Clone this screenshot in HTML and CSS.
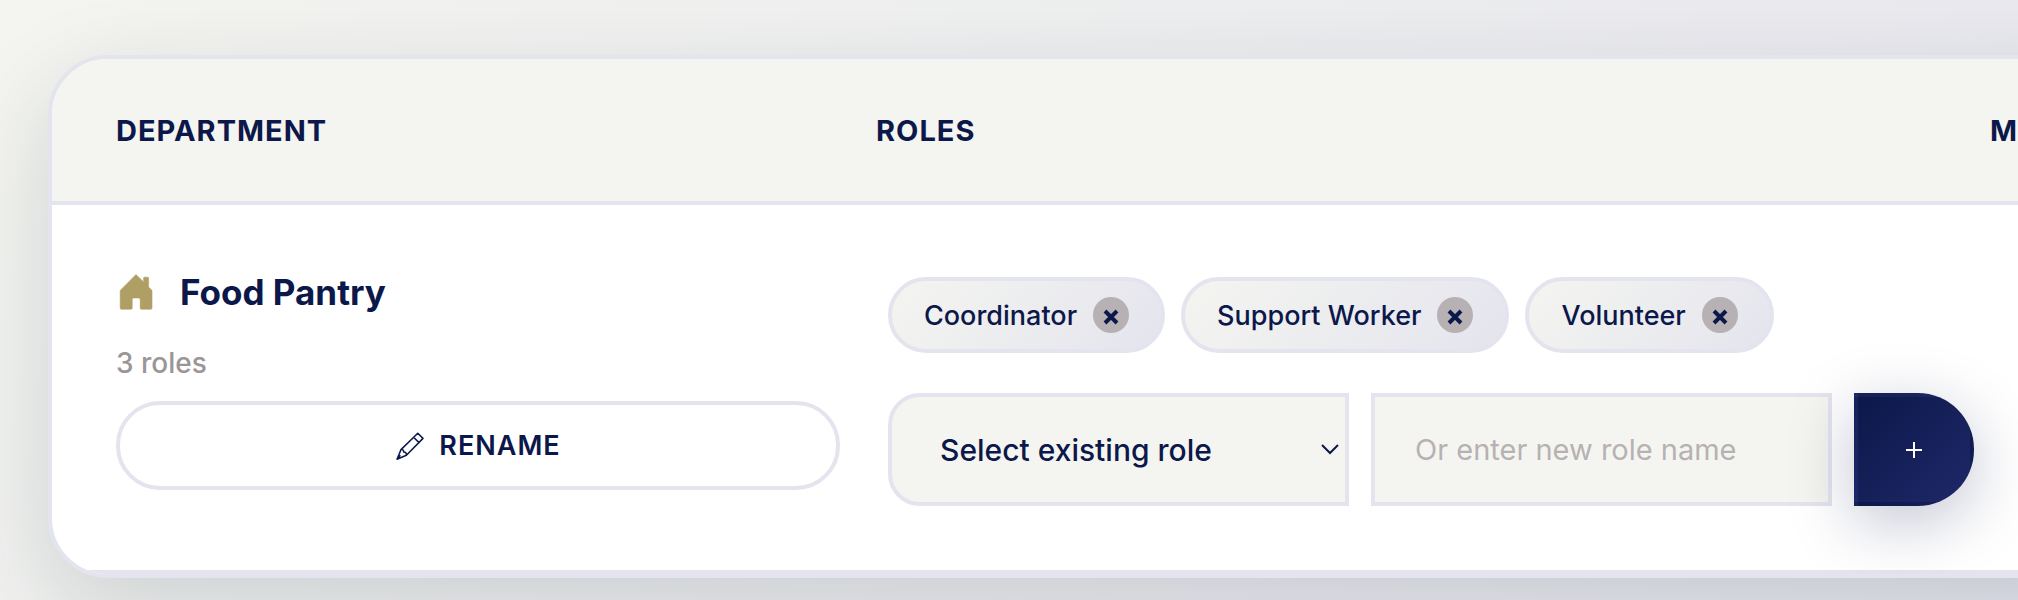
FILE: index.html
```html
<!DOCTYPE html>
<html lang="en">
<head>
<meta charset="utf-8">
<title>Departments</title>
<link rel="stylesheet" href="styles.css">
</head>
<body>
<main class="page">
  <div class="card">
    <table class="departments">
      <colgroup>
        <col class="col-department">
        <col class="col-roles">
        <col class="col-more">
      </colgroup>
      <thead>
        <tr>
          <th scope="col">Department</th>
          <th scope="col">Roles</th>
          <th scope="col">M</th>
        </tr>
      </thead>
      <tbody>
        <tr>
          <td>
            <div class="department">
              <svg class="department-icon" viewBox="0 0 40 40" aria-hidden="true">
                <path d="M20 2.6 27.6 10V6a.8.8 0 0 1 .8-.8h3.4a.8.8 0 0 1 .8.8v9L36 18.4V36a1.200 1.200 0 0 1-1.200 1.200H25.400A1.200 1.200 0 0 1 24.200 36V27.500a1.500 1.500 0 0 0-1.500-1.500h-5a1.500 1.500 0 0 0-1.500 1.500V36a1.200 1.200 0 0 1-1.200 1.200H5.400A1.200 1.200 0 0 1 4.200 36V18.400z" fill="currentColor" stroke="currentColor" stroke-width=".6" stroke-linejoin="round"/>
              </svg>
              <span class="department-name">Food Pantry</span>
            </div>
            <div class="role-count">3 roles</div>
            <button class="rename" type="button">
              <svg class="pencil" viewBox="0 0 30 30" aria-hidden="true">
                <path d="M2 28.200 6 18.600 22.800 2.200 28 7.400 11.400 24.200zM18.600 6.200l5.400 5.400M6 18.600c1.800-.3 2.800.6 2.600 2.400 1.800-.2 3 1 2.800 3.200M2 28.200 5 24.800" fill="none" stroke="currentColor" stroke-width="1.500" stroke-linejoin="round" stroke-linecap="round"/>
              </svg>
              Rename
            </button>
          </td>
          <td>
            <div class="chips">
              <span class="chip">Coordinator
                <button class="chip-remove" type="button" aria-label="Remove Coordinator"><svg viewBox="0 0 36 36" aria-hidden="true"><path d="M12 14 24 26M24 14 12 26"/></svg></button>
              </span>
              <span class="chip">Support Worker
                <button class="chip-remove" type="button" aria-label="Remove Support Worker"><svg viewBox="0 0 36 36" aria-hidden="true"><path d="M12 14 24 26M24 14 12 26"/></svg></button>
              </span>
              <span class="chip">Volunteer
                <button class="chip-remove" type="button" aria-label="Remove Volunteer"><svg viewBox="0 0 36 36" aria-hidden="true"><path d="M12 14 24 26M24 14 12 26"/></svg></button>
              </span>
            </div>
            <form class="role-form">
              <div class="select-wrap">
                <select class="field select" aria-label="Existing role">
                  <option>Select existing role</option>
                </select>
                <svg class="chevron" viewBox="0 0 20 12" aria-hidden="true"><path d="M2 2 10 10 18 2"/></svg>
              </div>
              <input class="field input" type="text" placeholder="Or enter new role name" aria-label="New role name">
              <button class="add" type="button" aria-label="Add role"><svg viewBox="0 0 16 16" aria-hidden="true"><path d="M8 0V16M0 8H16"/></svg></button>
            </form>
          </td>
          <td></td>
        </tr>
      </tbody>
    </table>
  </div>
</main>
</body>
</html>
```
FILE: styles.css
```css
:root {
  --navy: #0c184a;
  --navy-light: #1f2868;
  --cream: #f4f5f0;
  --lilac: #e4e4ee;
  --grey: #b7b1b4;
  --gold: #b09f65;
}

* {
  box-sizing: border-box;
}

body {
  margin: 0;
  color: var(--navy);
  font-family: Inter, "Liberation Sans", sans-serif;
}

button,
input,
select {
  font: inherit;
  color: inherit;
}

.page {
  min-height: 100vh;
  padding: 55px 48px 20px;
  overflow: hidden;
  background: linear-gradient(135deg, var(--cream), var(--lilac) 110%);
}

.card {
  width: 120%;
  border: 4px solid var(--lilac);
  border-radius: 60px;
  overflow: hidden;
  background: #fff;
  box-shadow: 0 32px 96px rgba(16, 32, 48, 0.15);
}

.departments {
  width: 100%;
  table-layout: fixed;
  border-collapse: separate;
  border-spacing: 0;
}

.col-department {
  width: 812px;
}

.col-roles {
  width: 1110px;
}

th {
  padding: 55px 12px 53px;
  border-bottom: 4px solid var(--lilac);
  background: var(--cream);
  font-size: 29px;
  line-height: 34px;
  font-weight: 700;
  letter-spacing: 1px;
  text-align: left;
  text-transform: uppercase;
}

th:first-child {
  padding-left: 64px;
}

th:last-child {
  padding-left: 16px;
}

td {
  padding: 64px 0 64px 24px;
  border-bottom: 4px solid var(--lilac);
  vertical-align: top;
}

td:first-child {
  padding: 64px 24px 64px 64px;
}

.department {
  display: flex;
  align-items: center;
  gap: 24px;
  height: 46px;
}

.department-icon {
  width: 40px;
  height: 40px;
  color: var(--gold);
}

.department-name {
  font-size: 35px;
  line-height: 46px;
  font-weight: 700;
}

.role-count {
  margin: 30px 0 20px;
  color: #9c9598;
  font-size: 28px;
  line-height: 36px;
  font-weight: 500;
}

.rename {
  display: flex;
  align-items: center;
  justify-content: center;
  gap: 14px;
  width: 100%;
  height: 89px;
  border: 4px solid var(--lilac);
  border-radius: 44px;
  background: #fff;
  font-size: 27px;
  font-weight: 600;
  letter-spacing: 1px;
  text-transform: uppercase;
}

.pencil {
  width: 30px;
  height: 30px;
}

.chips {
  display: flex;
  gap: 16px;
  padding-top: 8px;
}

.chip {
  display: flex;
  align-items: center;
  gap: 16px;
  height: 76px;
  padding: 0 32px;
  border: 4px solid var(--lilac);
  border-radius: 38px;
  background: linear-gradient(135deg, var(--cream), var(--lilac));
  font-size: 27px;
  font-weight: 500;
  white-space: nowrap;
}

.chip-remove {
  width: 36px;
  height: 36px;
  padding: 0;
  border: 0;
  border-radius: 50%;
  background: var(--grey);
}

.chip-remove svg {
  display: block;
  fill: none;
  stroke: var(--navy);
  stroke-width: 4;
}

.role-form {
  display: grid;
  grid-template-columns: 1fr 1fr 120px;
  gap: 22px;
  margin-top: 40px;
}

.select-wrap {
  position: relative;
}

.field {
  width: 100%;
  min-width: 0;
  height: 113px;
  border: 4px solid var(--lilac);
  border-radius: 0;
  background: var(--cream);
  font-size: 30px;
}

.select {
  padding: 0 48px;
  border-radius: 32px 0 0 32px;
  appearance: none;
  font-weight: 500;
}

.chevron {
  position: absolute;
  top: 50px;
  right: 9px;
  width: 20px;
  height: 12px;
  fill: none;
  stroke: var(--navy);
  stroke-width: 2;
  pointer-events: none;
}

.input {
  padding: 0 40px;
  font-size: 29px;
}

.input::placeholder {
  color: var(--grey);
  opacity: 1;
}

.add {
  display: flex;
  align-items: center;
  justify-content: center;
  height: 113px;
  border: 4px solid transparent;
  border-radius: 0 56px 56px 0;
  background: linear-gradient(135deg, var(--navy), var(--navy-light));
  box-shadow: 0 16px 64px rgba(12, 24, 74, 0.25);
}

.add svg {
  width: 16px;
  height: 16px;
  stroke: #fff;
  stroke-width: 2;
}
```
